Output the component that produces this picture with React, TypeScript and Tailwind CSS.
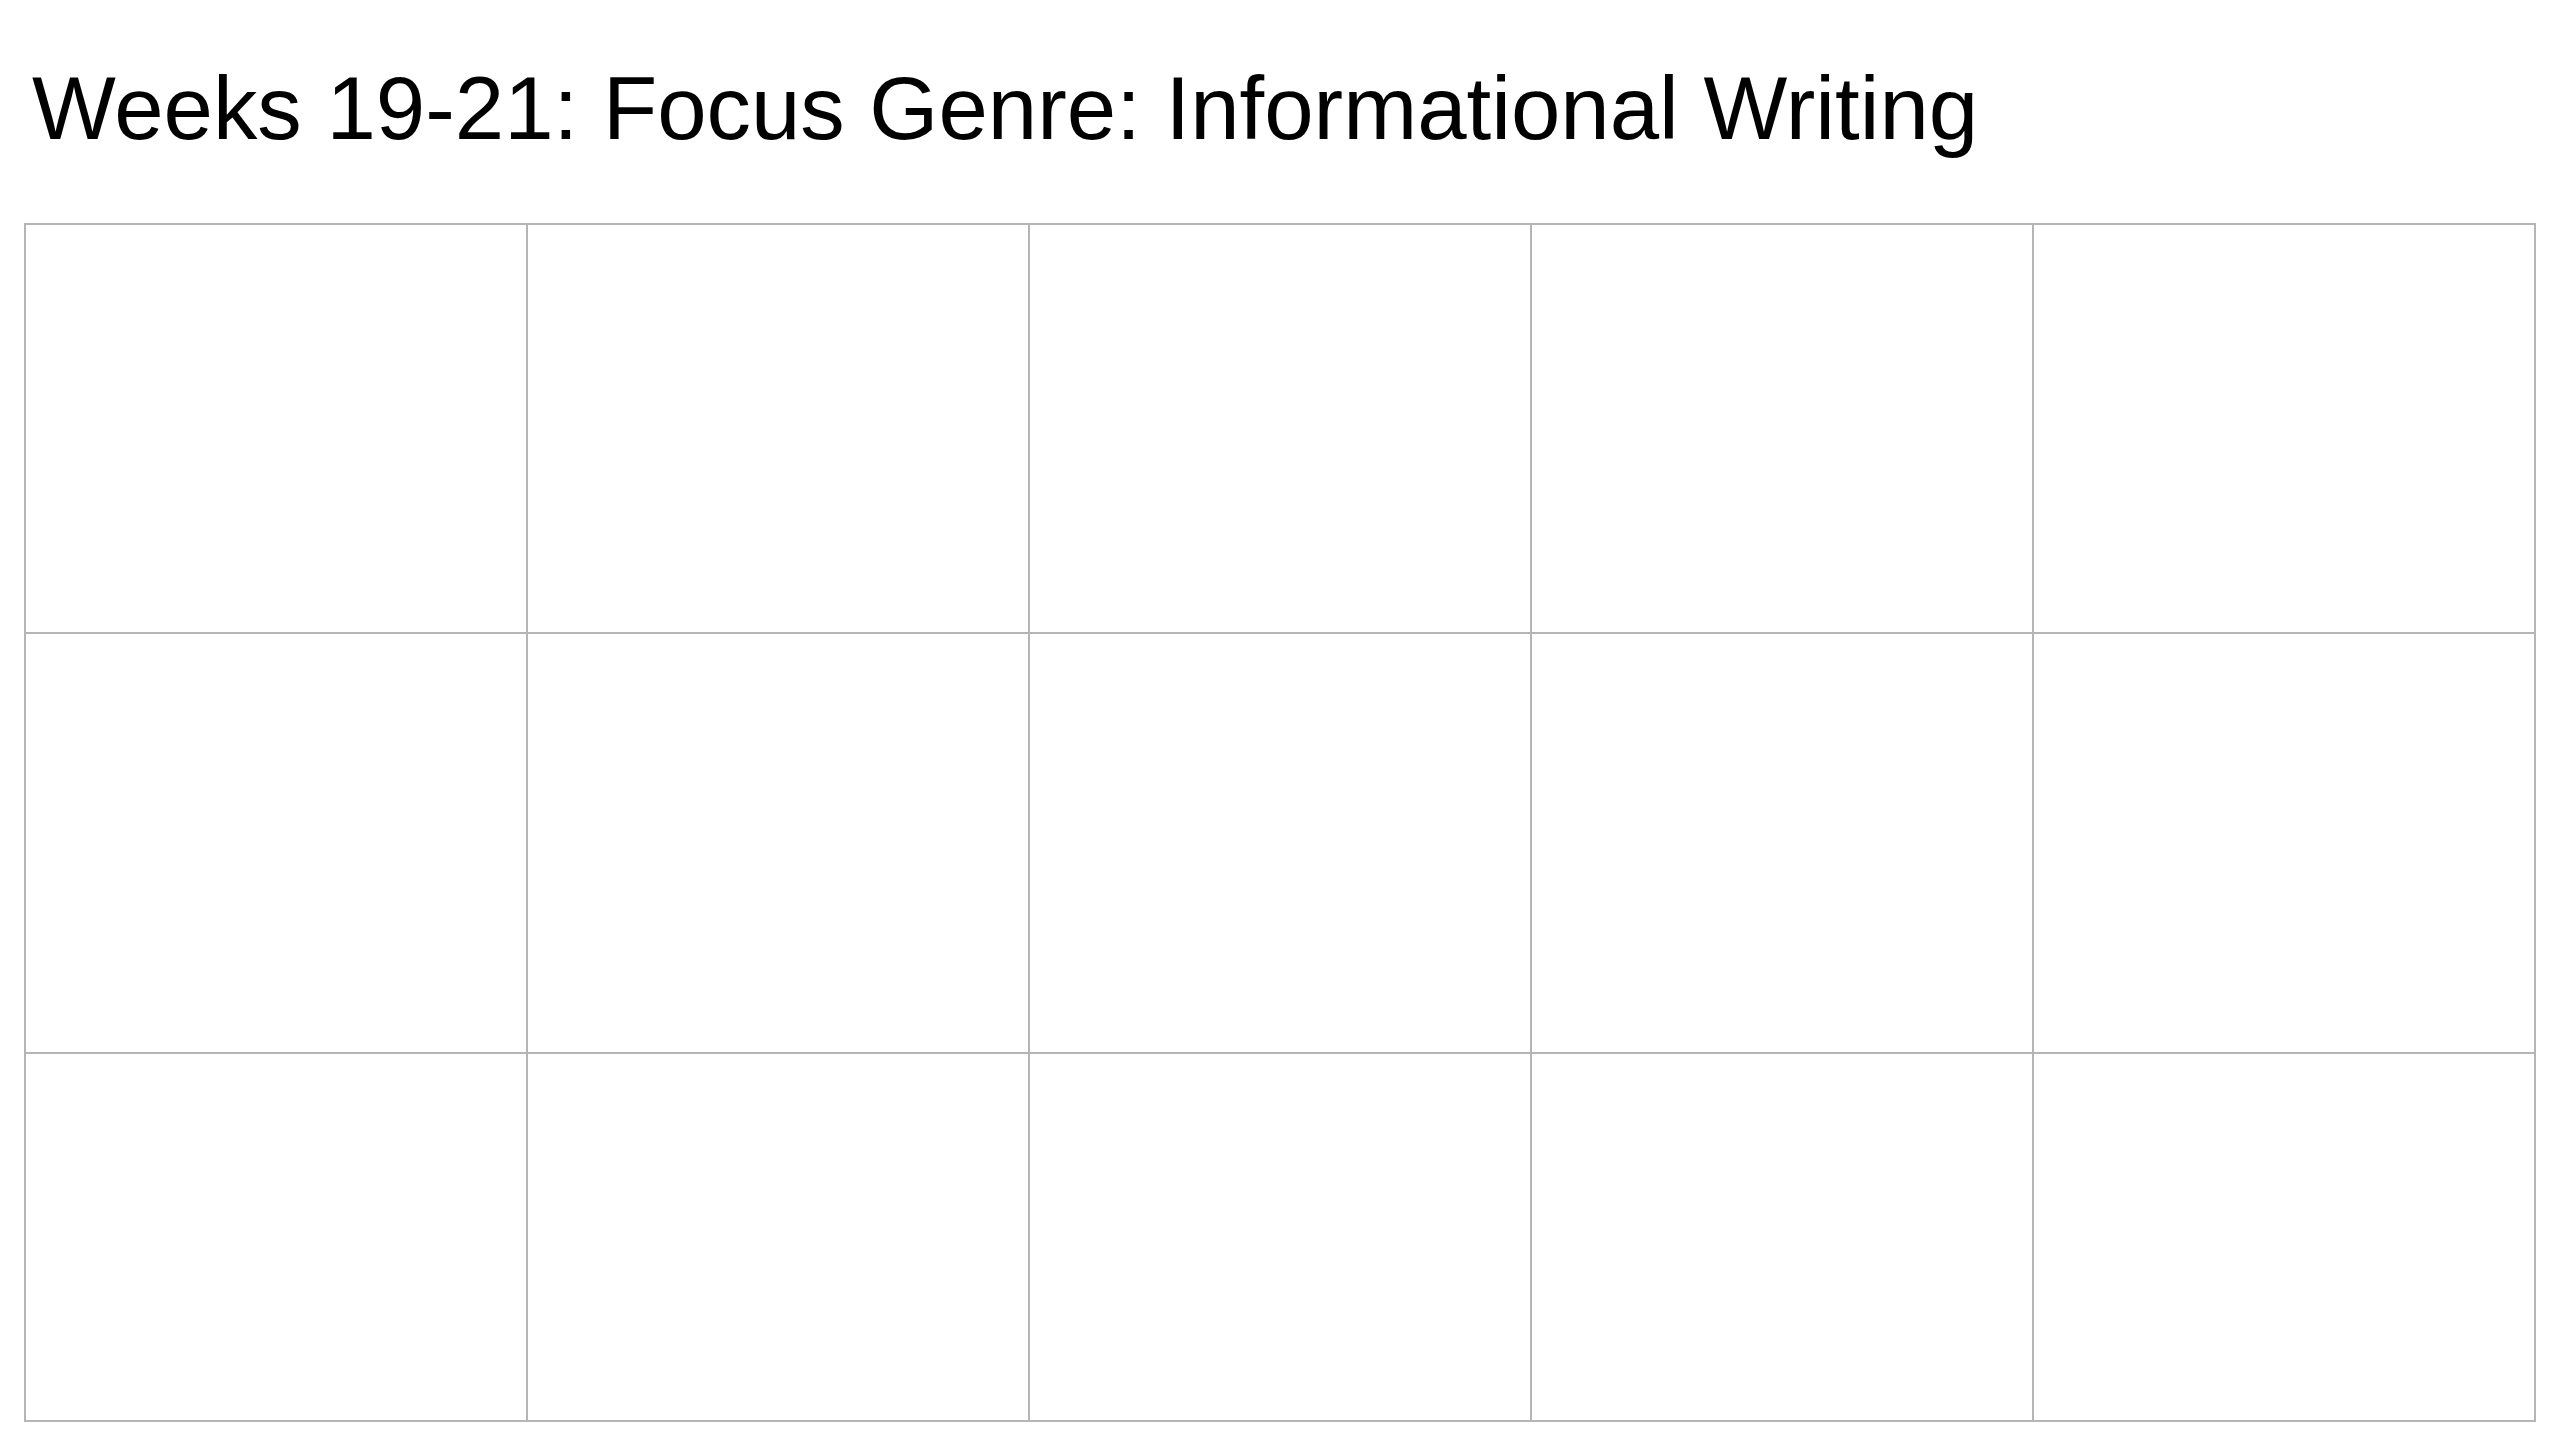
import React from 'react';

const rows = [407, 418, 366];
const cols = 5;

export default function App() {
  return (
    <div className="min-h-screen w-[2560px] bg-white font-['Liberation_Sans',Arial,sans-serif] text-black">
      {/* Heading */}
      <h1 className="pl-[32px] pt-[64px] text-[88.8px] leading-[89px] font-normal">
        Weeks 19-21: Focus Genre: Informational Writing
      </h1>

      {/* Empty planning grid */}
      <div
        className="ml-[24px] mt-[70px] grid w-[2512px] grid-cols-5 grid-rows-[407px_418px_366px] gap-[2px] border-2 border-[#b5b5b5] bg-[#b5b5b5]"
      >
        {rows.map((_, r) =>
          Array.from({ length: cols }).map((__, c) => (
            <div key={`${r}-${c}`} className="bg-white" />
          ))
        )}
      </div>
    </div>
  );
}
